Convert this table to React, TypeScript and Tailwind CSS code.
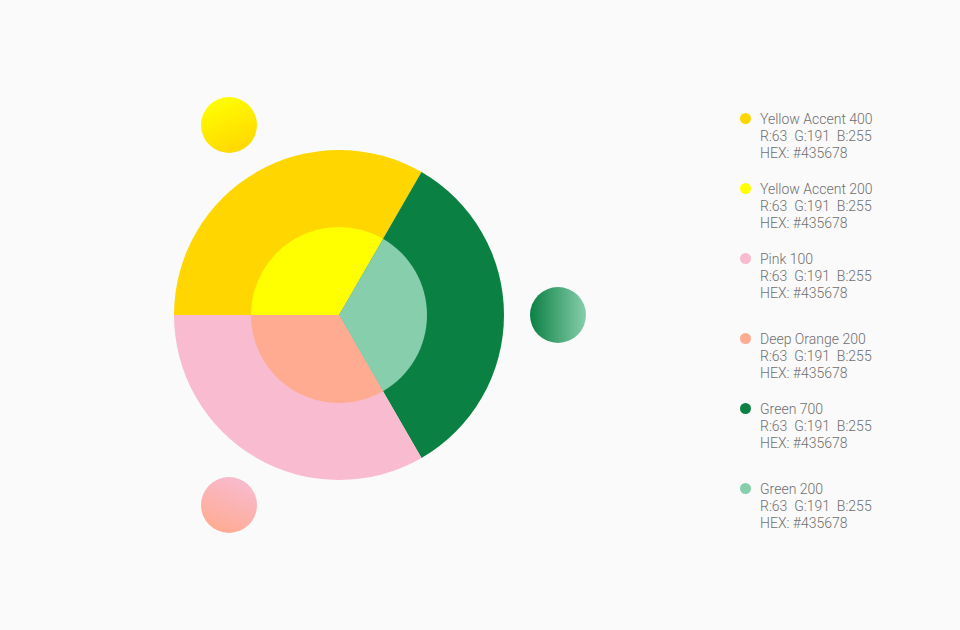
import React from "react";

const cx = 339;
const cy = 315;
const R = 165;
const r = 88;

function pt(rad: number, deg: number) {
  const a = (deg * Math.PI) / 180;
  return [cx + rad * Math.cos(a), cy - rad * Math.sin(a)];
}

function sector(rad: number, from: number, to: number) {
  const [x1, y1] = pt(rad, from);
  const [x2, y2] = pt(rad, to);
  const large = to - from > 180 ? 1 : 0;
  return `M ${cx} ${cy} L ${x1} ${y1} A ${rad} ${rad} 0 ${large} 0 ${x2} ${y2} Z`;
}

const legend = [
  { name: "Yellow Accent 400", color: "bg-[#ffd600]", mt: "mt-0" },
  { name: "Yellow Accent 200", color: "bg-[#ffff00]", mt: "mt-[19px]" },
  { name: "Pink 100", color: "bg-[#f8bbd0]", mt: "mt-[19px]" },
  { name: "Deep Orange 200", color: "bg-[#ffab91]", mt: "mt-[29px]" },
  { name: "Green 700", color: "bg-[#0b8043]", mt: "mt-[19px]" },
  { name: "Green 200", color: "bg-[#87ceac]", mt: "mt-[29px]" },
];

export default function App() {
  return (
    <div
      className="w-[960px] h-[630px] bg-[#fafafa] flex overflow-hidden"
      style={{ fontFamily: "Roboto, 'Liberation Sans', sans-serif" }}
    >
      <svg width="740" height="630" viewBox="0 0 740 630" className="shrink-0">
        <defs>
          <linearGradient id="gy" x1="0.3" y1="0" x2="0.7" y2="1">
            <stop offset="0" stopColor="#ffff00" />
            <stop offset="1" stopColor="#ffd600" />
          </linearGradient>
          <linearGradient id="gg" x1="0" y1="0" x2="1" y2="0">
            <stop offset="0" stopColor="#0b8043" />
            <stop offset="1" stopColor="#87ceac" />
          </linearGradient>
          <linearGradient id="gp" x1="0.7" y1="0" x2="0.3" y2="1">
            <stop offset="0" stopColor="#f8bbd0" />
            <stop offset="1" stopColor="#ffab91" />
          </linearGradient>
        </defs>
        <path d={sector(R, 60, 180)} fill="#ffd600" />
        <path d={sector(R, -60, 60)} fill="#0b8043" />
        <path d={sector(R, 180, 300)} fill="#f8bbd0" />
        <path d={sector(r, 60, 180)} fill="#ffff00" />
        <path d={sector(r, -60, 60)} fill="#87ceac" />
        <path d={sector(r, 180, 300)} fill="#ffab91" />
        <circle cx="229" cy="125" r="28" fill="url(#gy)" />
        <circle cx="558" cy="315" r="28" fill="url(#gg)" />
        <circle cx="229" cy="505" r="28" fill="url(#gp)" />
      </svg>
      <div className="flex flex-col pt-[111px]">
        {legend.map((l) => (
          <div key={l.name} className={`flex items-start gap-[9px] ${l.mt}`}>
            <span className={`w-[11px] h-[11px] rounded-full mt-[2px] shrink-0 ${l.color}`} />
            <div className="text-[14px] leading-[17px] font-light text-[#6f6f6f]">
              <div>{l.name}</div>
              <div className="whitespace-pre">R:63  G:191  B:255</div>
              <div>HEX: #435678</div>
            </div>
          </div>
        ))}
      </div>
    </div>
  );
}
